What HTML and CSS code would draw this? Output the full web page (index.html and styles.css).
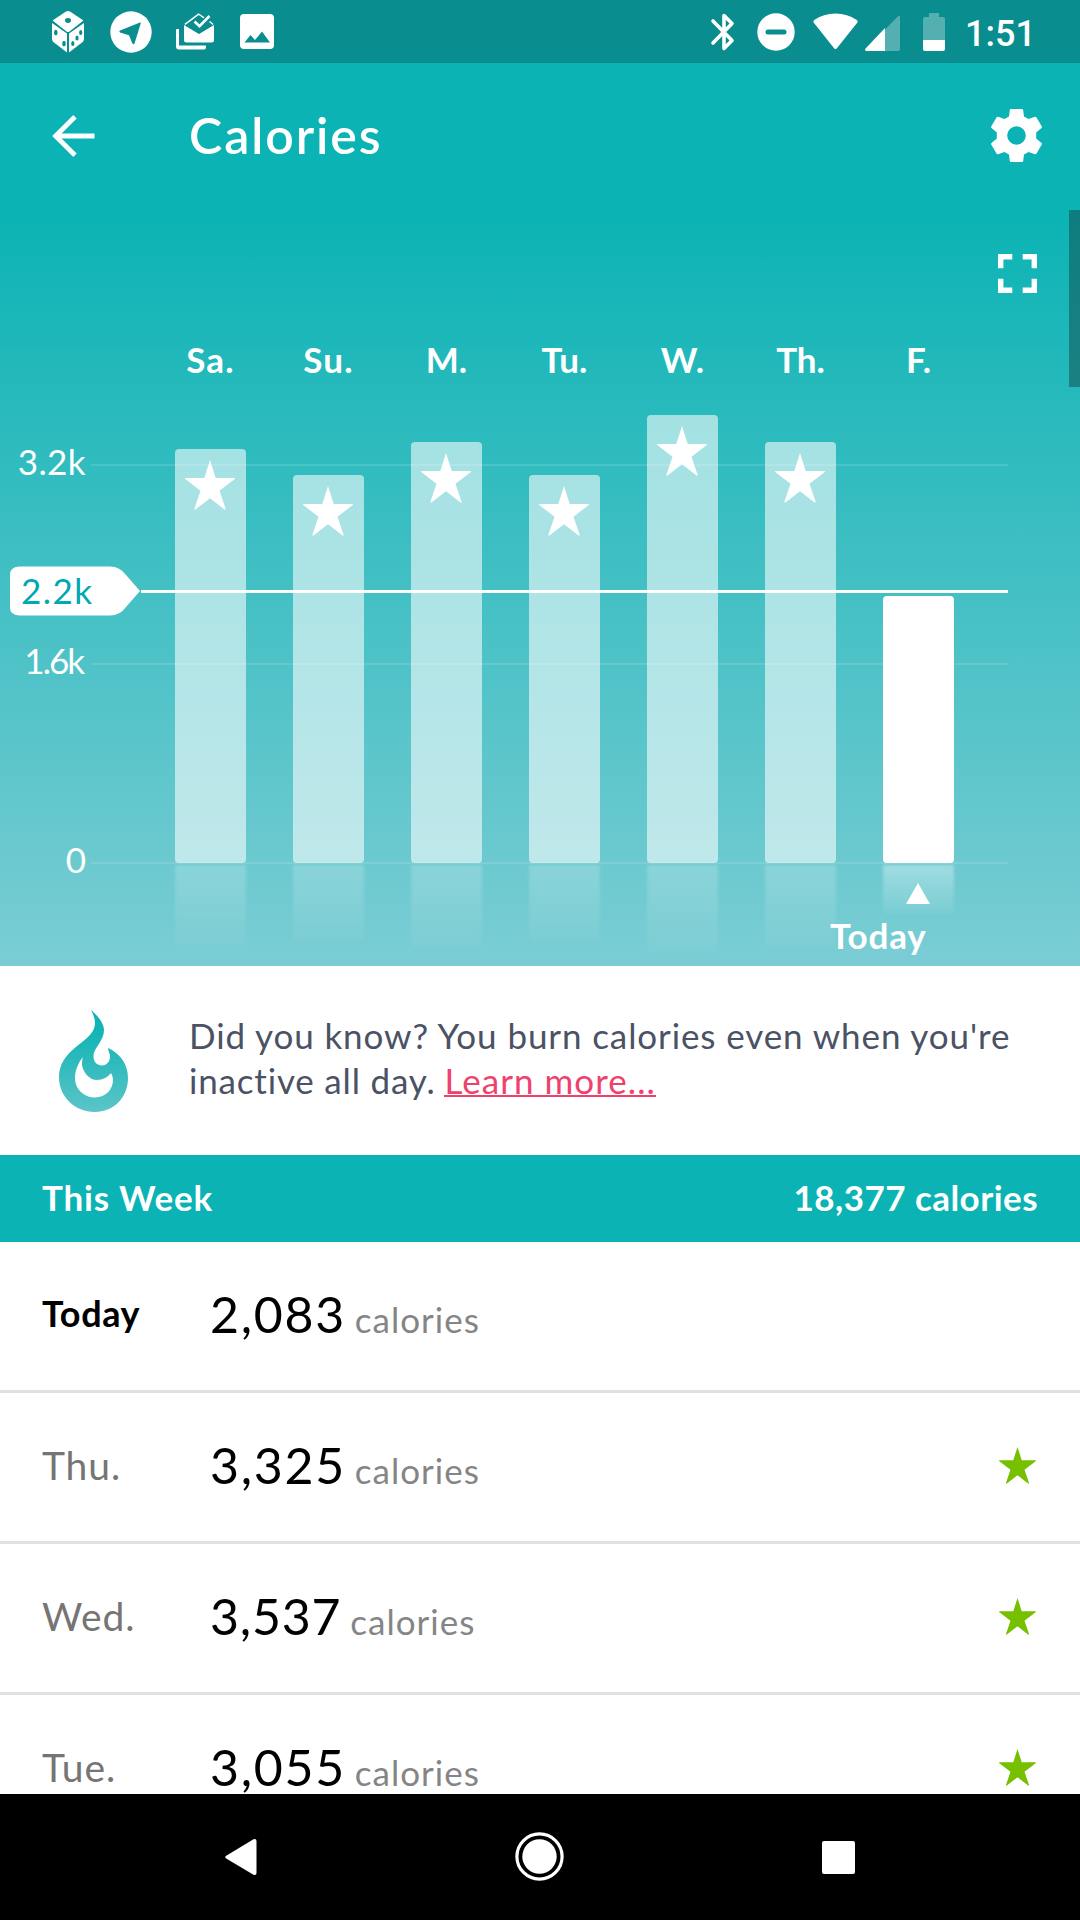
FILE: index.html
```html
<!DOCTYPE html>
<html lang="en">
<head>
<meta charset="utf-8">
<title>Calories</title>
<link rel="stylesheet" href="styles.css">
</head>
<body>
<svg class="defs" aria-hidden="true">
  <symbol id="star" viewBox="0 0 50 50"><path d="M25 0 30.700 18H50L49.500 19.200 34.500 30.800 40.700 49 39.800 49.800 25 38.200 10.200 49.800 9.300 49 15.500 30.800 .500 19.200 0 18H19.300Z"/></symbol>
</svg>
<div class="screen">
  <div class="status">
    <div class="status-left">
      <svg class="i-dice" width="32" height="42" viewBox="0 0 32 42">
        <path fill="#fff" d="M14 .6Q16 -.4 18 .6L31.500 9.500 17.500 20.500Q16 21.500 14.500 20.500L.500 9.500ZM0 12 15 22.500V41.500L2 31.500Q0 30 0 28ZM32 12 17 22.500V41.500L30 31.500Q32 30 32 28Z"/>
        <g class="cut"><ellipse cx="16" cy="9.500" rx="3" ry="2.400"/><ellipse cx="3.800" cy="21.500" rx="1.800" ry="2.700"/><ellipse cx="12" cy="32.500" rx="1.800" ry="2.700"/><ellipse cx="28.700" cy="21.500" rx="1.600" ry="2.600"/><ellipse cx="25" cy="27" rx="1.600" ry="2.600"/><ellipse cx="20.800" cy="32.500" rx="1.600" ry="2.600"/></g>
      </svg>
      <svg width="42" height="42" viewBox="0 0 42 42"><circle cx="21" cy="21" r="20.700" fill="#fff"/><path class="cut" d="M30 11.600Q31 11.500 30.700 12.600L24.500 32.500Q23.500 34 22.400 32.500L19 24.200 10 21.400Q8.500 20.400 10 19.400Z"/></svg>
      <svg class="i-inbox" width="38" height="38" viewBox="0 0 38 38">
        <path fill="#fff" d="M0 17Q0 16 1 16H3V32.500H30V34Q30 36.500 28 36.500H3Q0 36.500 0 33.500ZM8 12 23 21 38 12V27Q38 29.500 35.500 29.500H10.500Q8 29.500 8 27Z"/>
        <path fill="none" stroke="#fff" stroke-width="1.600" d="M9 11.500 22.500 1.200 28 4.800M33.500 8.500 37 11.500"/>
        <path class="cut" d="M9.500 12 23 2.500 36.500 12 23 20.500Z"/>
        <path fill="none" stroke="#fff" stroke-width="2.600" d="M18.500 8.500 23.500 13.200 33.500 3"/>
      </svg>
      <svg class="i-image" width="34" height="35" viewBox="0 0 34 35"><rect width="34" height="35" rx="4" fill="#fff"/><path class="cut" d="M4.500 28.500 10.500 21 15 26 22 17.500 30 28.500Z"/></svg>
    </div>
    <div class="status-right">
      <svg class="i-bt" width="24" height="38" viewBox="0 0 24 38"><path fill="none" stroke="#fff" stroke-width="3.600" stroke-linejoin="round" stroke-linecap="round" d="M2 8 21 27.500 13 35.500V2.500L21 10.500 2 30"/></svg>
      <svg class="i-dnd" width="38" height="38" viewBox="0 0 38 38"><circle cx="19" cy="19" r="18.700" fill="#fff"/><rect class="cut" x="8.500" y="16.500" width="21" height="5" rx="2.500"/></svg>
      <svg class="i-wifi" width="45" height="37" viewBox="0 0 45 37"><path fill="#fff" d="M.600 9.500Q-.400 8 1.200 7Q10.500 .500 22.500 .500T43.800 7Q45.400 8 44.400 9.500L23.700 35.500Q22.500 36.600 21.300 35.500Z"/></svg>
      <svg class="i-cell" width="35" height="36" viewBox="0 0 35 36"><path fill="#fff" opacity=".3" d="M20 14.500 33 1.200Q35 0 35 2V34Q35 36 33 36H20Z"/><path fill="#fff" d="M20 13V36H2Q-1 36 .600 33.500Z"/></svg>
      <svg class="i-batt" width="22" height="38" viewBox="0 0 22 38"><path fill="#fff" opacity=".3" d="M6 0H16V4H20Q22 4 22 6V27H0V6Q0 4 2 4H6Z"/><path fill="#fff" d="M0 27H22V36Q22 38 20 38H2Q0 38 0 36Z"/></svg>
      <span class="clock">1:51</span>
    </div>
  </div>

  <header class="appbar">
    <svg width="43" height="42" viewBox="0 0 43 42"><path fill="none" stroke="#fff" stroke-width="4.800" d="M42.500 21H4M23 1.800 3.600 21 23 40.200"/></svg>
    <h1 class="title">Calories</h1>
    <svg class="gear" width="51" height="53" viewBox="0 0 51 53"><path fill="#fff" fill-rule="evenodd" d="M20 0H31Q32 0 32.200 1L33 7.500 37.500 10 44 7.800Q45 7.600 45.500 8.400L50.800 17.500Q51.200 18.300 50.500 19L45.200 23.500V29.500L50.500 34Q51.200 34.700 50.800 35.500L45.500 44.600Q45 45.400 44 45.200L37.500 43 33 45.500 32.200 52Q32 53 31 53H20Q19 53 18.800 52L18 45.500 13.500 43 7 45.200Q6 45.400 5.500 44.600L.200 35.500Q-.200 34.700 .500 34L5.800 29.500V23.500L.500 19Q-.200 18.300 .200 17.500L5.500 8.400Q6 7.600 7 7.800L13.500 10 18 7.500 18.800 1Q19 0 20 0ZM25.500 17.200A9.300 9.300 0 1 0 25.500 35.800 9.300 9.300 0 1 0 25.500 17.200Z"/></svg>
  </header>

  <section class="chart">
    <div class="expand"><svg width="39" height="39" viewBox="0 0 39 39"><path fill="none" stroke="#fff" stroke-width="5.400" d="M2.700 14.300V2.700H14.300M24.700 2.700H36.300V14.300M36.300 24.700V36.300H24.700M14.300 36.300H2.700V24.700"/></svg></div>
    <div class="days"><span class="wide">Sa.</span><span class="wide">Su.</span><span>M.</span><span>Tu.</span><span>W.</span><span>Th.</span><span>F.</span></div>
    <div class="plot">
      <div class="gridline" style="bottom:397px"><span class="l32">3.2k</span></div>
      <div class="gridline" style="bottom:198px"><span class="l16">1.6k</span></div>
      <div class="gridline" style="bottom:-1px"><span>0</span></div>
      <div class="bar" style="height:414px"><svg class="star"><use href="#star"/></svg></div>
      <div class="bar" style="height:388px"><svg class="star"><use href="#star"/></svg></div>
      <div class="bar" style="height:421px"><svg class="star"><use href="#star"/></svg></div>
      <div class="bar" style="height:388px"><svg class="star"><use href="#star"/></svg></div>
      <div class="bar" style="height:448px"><svg class="star"><use href="#star"/></svg></div>
      <div class="bar" style="height:421px"><svg class="star"><use href="#star"/></svg></div>
      <div class="bar now" style="height:267px"></div>
      <div class="goal">
        <svg width="131" height="50" viewBox="0 0 131 50"><path fill="#fff" d="M9 .500H100Q110 .500 116 9L130 25 116 41Q110 49.500 100 49.500H9Q0 48.500 0 42V8Q0 1.500 9 .500Z"/></svg>
        <span>2.2k</span>
      </div>
    </div>
    <div class="today">
      <svg width="24" height="21" viewBox="0 0 24 21"><path fill="#fff" d="M12 0 24 21H0Z"/></svg>
      <span>Today</span>
    </div>
    <div class="thumb"></div>
  </section>

  <section class="tip">
    <svg width="70" height="102" viewBox="0 0 70 102">
      <defs><linearGradient id="fire" x1="0" y1="0" x2="0" y2="1"><stop offset="0" stop-color="#0bb3b4"/><stop offset=".25" stop-color="#16b5b6"/><stop offset="1" stop-color="#5bc5c8"/></linearGradient></defs>
      <path fill="url(#fire)" fill-rule="evenodd" d="M32 0C38 5 45 13 45 20C45 31 34.500 38 34.500 46C34.500 52 38 55.500 43 55.500C48 55.500 51 51 51 47C51 43 49 41 49 38C60 43 69 53 69 68C69 88 54 102 36 102C16 102 0 87 0 67C0 54 7 45 18 36C30 27 36 21 36 13C36 8 34 4 32 0ZM24 47C19 53 16 61 16 68C16 79 25 87.500 36 87.500C47 87.500 54 79 54 70C54 67 53 65 52 63C49 67 44 70 38 70C30 70 24 62 23 55C23 52 23 49 24 47Z"/>
    </svg>
    <p><span class="tip1">Did you know? You burn calories even when you're</span><br><span class="tip2">inactive all day.</span> <a class="tip3">Learn more...</a></p>
  </section>

  <div class="week"><span class="wk">This Week</span><span class="total">18,377 calories</span></div>

  <div class="rows">
    <div class="row first"><span class="day">Today</span><span class="num">2,083</span><span class="unit">calories</span></div>
    <div class="row"><span class="day">Thu.</span><span class="num">3,325</span><span class="unit">calories</span><svg class="met"><use href="#star"/></svg></div>
    <div class="row"><span class="day">Wed.</span><span class="num tight">3,537</span><span class="unit">calories</span><svg class="met"><use href="#star"/></svg></div>
    <div class="row"><span class="day">Tue.</span><span class="num">3,055</span><span class="unit">calories</span><svg class="met"><use href="#star"/></svg></div>
  </div>

  <nav class="nav">
    <svg width="32" height="36" viewBox="0 0 32 36"><path fill="#fff" d="M.800 17Q-.300 18 .800 19.200L28.500 35.700Q31.500 36.500 31.500 34V2Q31.500 -.500 28.500 .300Z"/></svg>
    <svg width="50" height="50" viewBox="0 0 50 50"><circle cx="24.500" cy="24.500" r="22.600" fill="none" stroke="#fff" stroke-width="3.200"/><circle cx="24.500" cy="24.500" r="17.200" fill="#fff"/></svg>
    <svg width="33" height="33" viewBox="0 0 33 33"><rect width="33" height="33" rx="2" fill="#fff"/></svg>
  </nav>
</div>
</body>
</html>
```
FILE: styles.css
```css
* { box-sizing: border-box; }
body { margin: 0; background: #fff; font-family: Lato, "Open Sans", sans-serif; font-variant-ligatures: none; }
svg { display: block; flex: none; overflow: visible; }
.defs { display: none; }
.screen { width: 1080px; height: 1920px; display: flex; flex-direction: column; overflow: hidden; }

.status { flex: none; height: 63px; background: #098d8e; display: flex; justify-content: space-between; align-items: center; padding-left: 52px; padding-right: 48px; }
.status-left, .status-right { display: flex; align-items: center; height: 63px; }
.status-left { gap: 26px; }
.i-inbox { margin-left: -2px; }
.status .cut { fill: #098d8e; }
.i-dnd { margin-left: 22px; }
.i-wifi { margin-left: 18px; }
.i-cell { margin-left: 7px; margin-top: 3px; }
.i-batt { margin-left: 23px; }
.clock { width: 67px; margin-left: 20px; font: 500 36px/40px Roboto, sans-serif; color: #fff; white-space: nowrap; padding-top: 4px; }

.appbar { flex: none; height: 147px; background: #0bb3b4; display: flex; align-items: center; padding: 0 38px 2px 52px; color: #fff; }
.title { margin: -2px auto 0 94px; font-size: 50px; font-weight: 600; line-height: 60px; letter-spacing: 1.9px; }

.chart { flex: none; height: 756px; position: relative; background: linear-gradient(#0bb3b4, #7bcdd4); color: #fff; font-size: 35px; display: flex; flex-direction: column; }
.expand { display: flex; justify-content: flex-end; padding: 44px 43px 0 0; }
.days { display: grid; grid-template-columns: repeat(7, 118px); margin: 43px 0 0 151.5px; height: 46px; line-height: 46px; text-align: center; font-weight: 700; }
.wide { letter-spacing: 1.2px; }
.plot { position: relative; height: 481px; display: flex; align-items: flex-end; gap: 47px; padding-left: 174.7px; }
.gridline { position: absolute; left: 91px; width: 917px; height: 2px; background: rgba(255,255,255,.13); }
.gridline span { position: absolute; right: 922px; bottom: -18px; line-height: 46px; }
.gridline .l32 { letter-spacing: .4px; }
.gridline .l16 { letter-spacing: -2px; right: 925px; }
.bar { position: relative; width: 71px; background: rgba(255,255,255,.57); border-radius: 4px; display: flex; justify-content: center; padding: 10.5px 1px 0 0; }
.bar::after { content: ""; position: absolute; left: 0; right: 0; top: calc(100% + 2px); height: 19.5%; background: linear-gradient(rgba(255,255,255,.2), rgba(255,255,255,.04)); filter: blur(1.5px); }
.bar.now { background: #fff; }
.bar.now::after { height: 18.5%; background: linear-gradient(rgba(255,255,255,.36), rgba(255,255,255,.04)); }
.star { width: 50px; height: 50px; fill: #fff; }
.goal { position: absolute; left: 10px; bottom: 247px; width: 998px; height: 50px; display: flex; align-items: center; }
.goal::after { content: ""; flex: 1; height: 3px; background: #fff; margin-top: 1px; }
.goal span { position: absolute; left: 11px; top: 1px; line-height: 46px; letter-spacing: 1.5px; color: #00a9b2; }
.today { display: flex; flex-direction: column; padding-left: 906px; padding-top: 20px; font-weight: 700; }
.today span { margin: 8px 0 0 -76px; line-height: 46px; letter-spacing: .8px; }
.thumb { position: absolute; right: 0; top: 0; width: 11px; height: 177px; background: rgba(17,72,73,.5); }

.tip { flex: none; height: 189px; display: flex; align-items: flex-start; padding: 44px 0 0 59px; background: #fff; }
.tip p { margin: 3px 0 0 60px; font-size: 35px; line-height: 45px; color: #4a5264; white-space: nowrap; }
.tip1 { letter-spacing: .9px; }
.tip2 { letter-spacing: .82px; }
.tip3 { letter-spacing: 1.05px; }
.tip a { color: #ee426c; border-bottom: 2px solid #ee426c; display: inline-block; line-height: 30px; }

.week { flex: none; height: 87px; background: #0bb3b4; color: #fff; font-size: 35px; font-weight: 700; line-height: 84px; display: flex; justify-content: space-between; padding: 0 42px; }
.wk { letter-spacing: .8px; }
.total { letter-spacing: .45px; }

.rows { flex: 1; overflow: hidden; }
.row { height: 151px; border-bottom: 3px solid #e0e0e0; display: flex; align-items: baseline; padding: 42px 44.5px 0 42px; line-height: 60px; }
.day { width: 168px; font-size: 39px; letter-spacing: .9px; color: #757575; position: relative; top: -4px; }
.num { font-size: 50px; letter-spacing: 1.7px; color: #000; }
.tight { letter-spacing: .8px; }
.unit { margin-left: 9px; font-size: 35px; letter-spacing: 1px; color: #858585; }
.first .day { font-size: 36px; font-weight: 700; letter-spacing: .6px; color: #000; top: -6px; }
.met { width: 37px; height: 37px; fill: #76c000; margin: 0 0 1px auto; }

.nav { flex: none; height: 126px; background: #000; display: flex; align-items: center; justify-content: space-between; padding: 0 225px; }
```
